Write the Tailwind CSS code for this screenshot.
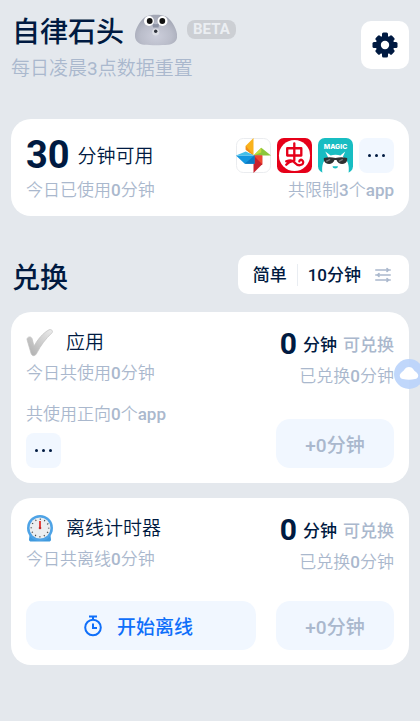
<!DOCTYPE html>
<html lang="zh-CN">
<head>
  <meta charset="UTF-8">
  <meta name="viewport" content="width=device-width, initial-scale=1">
  <title>自律石头</title>
  <script src="https://cdn.jsdelivr.net/npm/@tailwindcss/browser@4"></script>
</head>
<body class="relative min-h-screen overflow-x-hidden bg-[#e4e8ed] px-[11px] pb-14 font-['Roboto','Noto_Sans_CJK_SC',sans-serif] text-[#001a41]">
  <!-- Header -->
  <header class="flex items-start justify-between pt-3">
    <div>
      <div class="flex items-start">
        <h1 class="pt-0.5 pl-px text-[28px] leading-[38px] font-medium">自律石头</h1>
        <svg class="ml-[11px] mt-0.5 h-8 w-[42px]" viewBox="0 0 42 32" aria-hidden="true">
          <defs>
            <radialGradient id="stone" cx=".5" cy=".7" r=".62">
              <stop offset="0" stop-color="#cccedb"/>
              <stop offset=".6" stop-color="#babdca"/>
              <stop offset="1" stop-color="#a3a7b5"/>
            </radialGradient>
          </defs>
          <path d="M11 2.500C16 0 26 0 31 2.500c5 3 10 10.500 11 17.500 1 6-2.500 10-9 10.800-7 .6-17 .6-24 0C3 30-.8 26 0 20 1 13 6 5.500 11 2.500z" fill="url(#stone)"/>
          <path d="M17 8c1.500 3 6 3 7.500 0l-1 5.500h-5.500z" fill="#8d93a5"/>
          <circle cx="14" cy="7" r="5" fill="#fff"/>
          <circle cx="27.500" cy="7" r="5" fill="#fff"/>
          <circle cx="14.700" cy="7" r="2.900" fill="#111"/>
          <circle cx="27.300" cy="7" r="2.900" fill="#111"/>
          <circle cx="20.700" cy="18" r="3.600" fill="#dcdee5"/>
          <circle cx="20.700" cy="17.300" r="1.700" fill="#30343c"/>
        </svg>
        <span class="mt-2 ml-2.5 rounded-lg bg-[#cccfd4] px-1.5 text-[15px] leading-[19px] font-bold text-[#ebeef2]">BETA</span>
      </div>
      <p class="mt-[3px] text-[19px] leading-7 font-[350] text-[#aab8cd]">每日凌晨<span class="font-normal">3</span>点数据重置</p>
    </div>
    <button type="button" aria-label="设置" class="mt-[9px] flex size-12 items-center justify-center rounded-[10px] bg-white">
      <svg class="size-[26px]" viewBox="0 0 26 26" fill="#001a41">
        <rect x="10" y=".5" width="6" height="25" rx="1.500"/>
        <rect x=".5" y="10" width="25" height="6" rx="1.500"/>
        <rect x="10" y="1.500" width="6" height="23" rx="1.500" transform="rotate(45 13 13)"/>
        <rect x="10" y="1.500" width="6" height="23" rx="1.500" transform="rotate(-45 13 13)"/>
        <circle cx="13" cy="13" r="9.300"/>
        <circle cx="13" cy="13" r="4.200" fill="#fff"/>
      </svg>
    </button>
  </header>

  <main>
    <!-- Remaining time -->
    <section class="mt-9 flex justify-between rounded-[20px] bg-white px-[15px] pt-[17px] pb-3">
      <div>
        <p class="flex h-[38px] items-center gap-2">
          <strong class="text-[38px] leading-9 font-bold">30</strong>
          <span class="pt-1 text-[19px] leading-7 font-[350]">分钟可用</span>
        </p>
        <p class="mt-0.5 text-[17px] leading-7 font-[350] text-[#aab8cd]">今日已使用<span class="font-medium">0</span>分钟</p>
      </div>
      <div class="flex flex-col items-end">
        <div class="flex h-[38px] items-center gap-1.5">
          <!-- Pinwheel -->
          <svg class="size-[35px]" viewBox="0 0 36 36" aria-hidden="true">
            <rect x=".5" y=".5" width="35" height="35" rx="7" fill="#fff" stroke="#e9ebee"/>
            <path d="M18 0v18l-8-6V8z" fill="#f9b21c"/>
            <path d="M10 8l8 10-8-6z" fill="#f08a1c"/>
            <path d="M18 18l8-8 10 8H25z" fill="#8cc63a"/>
            <path d="M18 18l8-8v5z" fill="#c4dc3c"/>
            <path d="M18 18h9v9l-9 9z" fill="#c8202c"/>
            <path d="M18 18h9v9z" fill="#f0452f"/>
            <path d="M0 18h19v8.500H9z" fill="#1497df"/>
            <path d="M0 18l10-4 9 4z" fill="#45bfe8"/>
            <path d="M19 18v8.500H9z" fill="#0a78c2"/>
          </svg>
          <!-- Red round mark -->
          <svg class="size-[35px]" viewBox="0 0 36 36" fill="none" aria-hidden="true">
            <rect width="36" height="36" rx="7" fill="#e60019"/>
            <circle cx="18" cy="18" r="16" fill="#fff"/>
            <path d="M10.500 10.500h14.500v7.500H10.500zM17.800 5.500v17.500M9.500 24c4-1.500 6-1.500 8 .5s3 4 6 3.500 4.500-2.500 3-4.500-3.500-1-3.500.5M9.500 27.500c2-2 4-3.500 6-3.500" stroke="#e60019" stroke-width="2.400" stroke-linejoin="round" stroke-linecap="round"/>
          </svg>
          <!-- Character with sunglasses -->
          <svg class="size-[35px]" viewBox="0 0 36 36" aria-hidden="true">
            <rect width="36" height="36" rx="7" fill="#18bdc2"/>
            <path d="M4.500 36c-1-8 1-14 6-16l-3-6 5.500 4c3-1 7-1 10 0l5-4-2.500 5.500c5 2.500 7 8.500 6 16.500z" fill="#fff"/>
            <path d="M6 20.500c4-1 8-1 12 0 4-1 8-1 12 0v2c-.5 5-9 6-11 0h-2c-2 6-10 5-11 0z" fill="#2d2f31"/>
            <path d="M8.500 24l4-2M21.500 24l4-2" stroke="#77797c" stroke-width="1.500"/>
            <path d="M15 29h5.500c0 3-5.500 3-5.500 0z" fill="#18bdc2"/>
            <text x="18" y="11" text-anchor="middle" font-size="7" font-weight="800" fill="#fff" font-family="Inter, sans-serif">MAGIC</text>
          </svg>
          <button type="button" aria-label="更多受限应用" class="flex size-[35px] items-center justify-center gap-1 rounded-lg bg-[#f1f7ff]">
            <span class="size-[3px] rounded-full bg-[#001a41]"></span>
            <span class="size-[3px] rounded-full bg-[#001a41]"></span>
            <span class="size-[3px] rounded-full bg-[#001a41]"></span>
          </button>
        </div>
        <p class="mt-0.5 text-[17px] leading-7 font-[350] text-[#aab8cd]">共限制<span class="font-medium">3</span>个<span class="font-medium">app</span></p>
      </div>
    </section>

    <!-- Exchange -->
    <div class="mt-[39px] flex h-[39px] items-center justify-between">
      <h2 class="pt-2 pl-px text-[28px] leading-9 font-medium">兑换</h2>
      <button type="button" class="flex h-[39px] items-center rounded-[10px] bg-white pr-[18px] pl-[15px] text-[17px] leading-6 font-medium">
        <span>简单</span>
        <span class="mx-2.5 h-[22px] w-px bg-[#e9edf2]"></span>
        <span>10分钟</span>
        <svg class="ml-3.5 size-4" viewBox="0 0 16 16" fill="none" stroke="#aab8cd" stroke-width="1.600" stroke-linecap="round" aria-hidden="true">
          <path d="M.8 3h14.400M.8 8h14.400M.8 13h14.400M12 1.500L13.500 3 12 4.500M4 6.500L2.500 8 4 9.500M12 11.500l1.500 1.500-1.500 1.500"/>
        </svg>
      </button>
    </div>

    <!-- Apps -->
    <section class="mt-[18px] rounded-[20px] bg-white px-[15px] pt-[14px] pb-[15px]">
      <div class="flex justify-between">
        <div>
          <h3 class="flex h-[33px] items-center gap-3 text-[19px] leading-7 font-[350]">
            <svg class="size-7" viewBox="0 0 28 28" aria-hidden="true">
              <defs>
                <linearGradient id="tick" x1="1" y1="0" x2="0" y2="1">
                  <stop offset="0" stop-color="#ececec"/>
                  <stop offset="1" stop-color="#acacac"/>
                </linearGradient>
              </defs>
              <path d="M1 10.500c0-3 4-3.500 5-1l2 7.500C12 10 17 4 23 .8c2-1 4.500 1 3 3-6.500 6-11.500 13-15 20-1.500 3.500-5 4-6 .5z" fill="url(#tick)" stroke="#c0c0c0" stroke-width=".7"/>
            </svg>
            应用
          </h3>
          <p class="text-[17px] leading-7 font-[350] text-[#aab8cd]">今日共使用<span class="font-medium">0</span>分钟</p>
        </div>
        <div class="text-right">
          <p class="flex h-9 items-center justify-end text-[17px] leading-7 font-medium">
            <strong class="mr-1.5 text-[30px] leading-9 font-bold">0</strong>
            <span class="mr-1.5 pt-0.5">分钟</span>
            <span class="pt-0.5 text-[#aab8cd]">可兑换</span>
          </p>
          <p class="text-[17px] leading-7 font-[350] text-[#aab8cd]">已兑换<span class="font-medium">0</span>分钟</p>
        </div>
      </div>
      <div class="mt-2.5 flex items-end justify-between">
        <div>
          <p class="text-[17px] leading-7 font-[350] text-[#aab8cd]">共使用正向<span class="font-medium">0</span>个<span class="font-medium">app</span></p>
          <button type="button" aria-label="更多正向应用" class="mt-[5px] flex size-[35px] items-center justify-center gap-1 rounded-lg bg-[#f1f7ff]">
            <span class="size-[3px] rounded-full bg-[#001a41]"></span>
            <span class="size-[3px] rounded-full bg-[#001a41]"></span>
            <span class="size-[3px] rounded-full bg-[#001a41]"></span>
          </button>
        </div>
        <button type="button" class="h-[49px] w-[118px] rounded-[14px] bg-[#f1f7ff] pt-1.5 text-[19px] font-medium text-[#aab8cd]">+0分钟</button>
      </div>
    </section>

    <!-- Offline timer -->
    <section class="mt-[15px] rounded-[20px] bg-white px-[15px] pt-[14px] pb-[15px]">
      <div class="flex justify-between">
        <div>
          <h3 class="flex h-[33px] items-center gap-3 text-[19px] leading-7 font-[350]">
            <svg class="size-7" viewBox="0 0 28 28" aria-hidden="true">
              <path d="M4 17h20l1 7.500c0 1.500-1 2-2 2H5c-1 0-2-.5-2-2z" fill="#3f9ade"/>
              <circle cx="14" cy="13" r="13" fill="#4ea3e6"/>
              <circle cx="14" cy="13" r="10.500" fill="#eceef0"/>
              <circle cx="14" cy="13" r="8.700" fill="none" stroke="#444" stroke-width="1.500" stroke-dasharray="1 3.555" stroke-dashoffset=".5"/>
              <path d="M14 6v8" stroke="#e3302b" stroke-width="1.800"/>
              <circle cx="14" cy="13" r="1.300" fill="#c42a2a"/>
            </svg>
            离线计时器
          </h3>
          <p class="text-[17px] leading-7 font-[350] text-[#aab8cd]">今日共离线<span class="font-medium">0</span>分钟</p>
        </div>
        <div class="text-right">
          <p class="flex h-9 items-center justify-end text-[17px] leading-7 font-medium">
            <strong class="mr-1.5 text-[30px] leading-9 font-bold">0</strong>
            <span class="mr-1.5 pt-0.5">分钟</span>
            <span class="pt-0.5 text-[#aab8cd]">可兑换</span>
          </p>
          <p class="text-[17px] leading-7 font-[350] text-[#aab8cd]">已兑换<span class="font-medium">0</span>分钟</p>
        </div>
      </div>
      <div class="mt-[25px] flex gap-5">
        <button type="button" class="flex h-[49px] flex-1 items-center justify-center gap-3.5 rounded-[14px] bg-[#f1f7ff] pr-1.5 text-[19px] font-medium text-[#0f6ffa]">
          <svg class="h-[22px] w-5" viewBox="0 0 20 22" fill="none" stroke="currentColor" stroke-width="2" aria-hidden="true">
            <circle cx="10" cy="12.500" r="7.800"/>
            <path d="M6 1.500h8M10 2v3M10 8.500v4.500h4"/>
          </svg>
          <span class="pt-1.5">开始离线</span>
        </button>
        <button type="button" class="h-[49px] w-[118px] rounded-[14px] bg-[#f1f7ff] pt-1.5 text-[19px] font-medium text-[#aab8cd]">+0分钟</button>
      </div>
    </section>
  </main>

  <!-- Floating bubble, half hidden behind the screen edge -->
  <button type="button" aria-label="悬浮球" class="absolute top-[359px] -right-1 flex size-[30px] items-center justify-center rounded-full bg-[#b9d3fb]/90">
    <svg class="h-4 w-5" viewBox="0 0 20 16" fill="#fff" aria-hidden="true">
      <path d="M10 1c4 0 4 3 7 5 4 3 2 7-1 7-4 1-8 1-12 0-3 0-5-4-1-7 3-2 3-5 7-5z"/>
    </svg>
  </button>
</body>
</html>
